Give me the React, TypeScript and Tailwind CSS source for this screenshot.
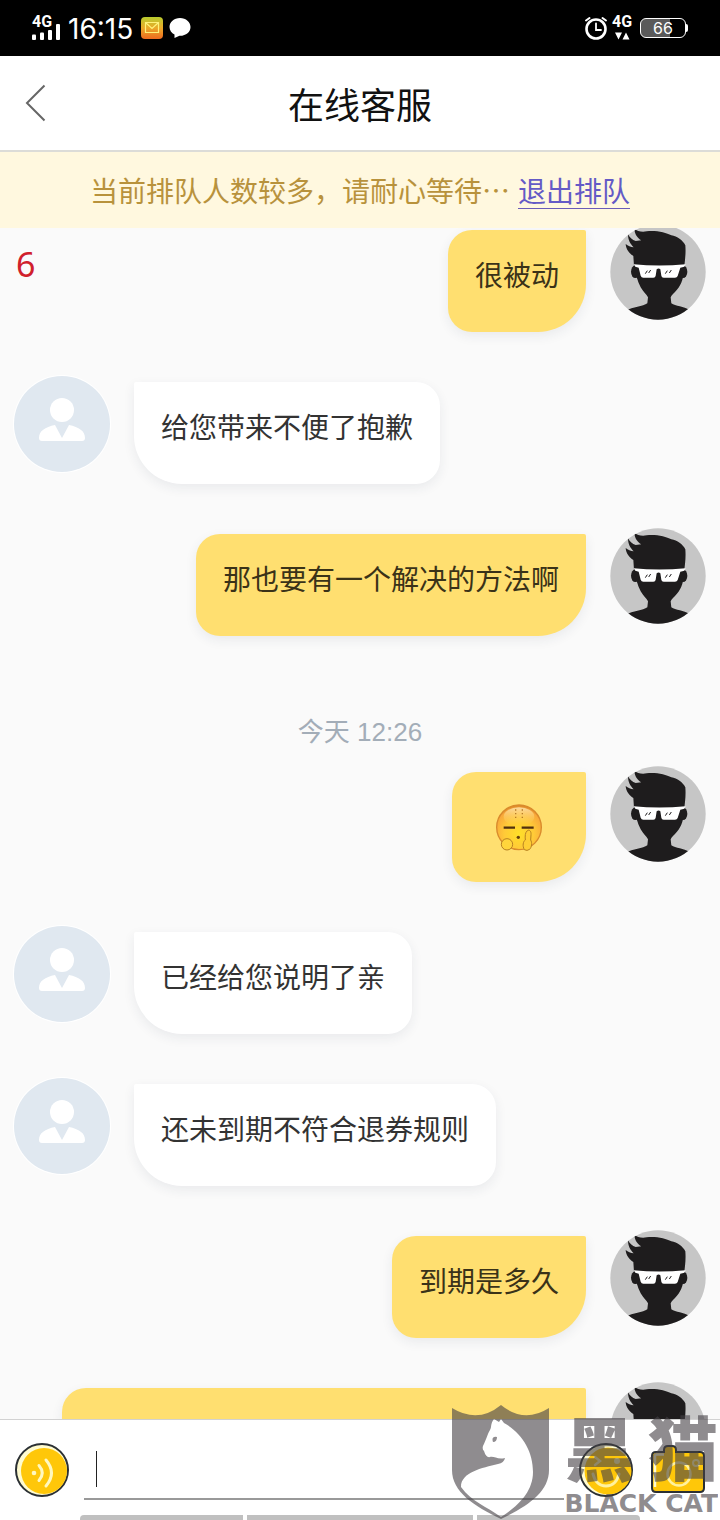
import type { ReactNode } from "react";

type Message = {
  id: number;
  from: "me" | "agent";
  text?: string;
  time?: string;
};

const messages: Message[] = [
  { id: 1, from: "me", text: "很被动" },
  { id: 2, from: "agent", text: "给您带来不便了抱歉" },
  { id: 3, from: "me", text: "那也要有一个解决的方法啊" },
  { id: 4, from: "me", time: "今天 12:26" },
  { id: 5, from: "agent", text: "已经给您说明了亲" },
  { id: 6, from: "agent", text: "还未到期不符合退券规则" },
  { id: 7, from: "me", text: "到期是多久" },
];

function StatusBar() {
  return (
    <div className="flex h-14 shrink-0 items-center justify-between bg-black pr-8 pl-8 font-['Roboto','Liberation_Sans',sans-serif] text-white">
      <div className="flex items-center">
        <div className="flex w-7 flex-col">
          <span className="text-[16px] leading-3 font-bold">4G</span>
          <svg viewBox="0 0 28 16" className="-mt-1 h-4 w-7" fill="#fff" aria-hidden="true">
            <rect x="0" y="10.500" width="4" height="5.500" rx="1" />
            <rect x="8" y="8.500" width="4" height="7.500" rx="1" />
            <rect x="16" y="6" width="4" height="10" rx="1" />
            <rect x="24" y="0" width="4" height="16" rx="1" />
          </svg>
        </div>
        <span className="ml-2 pt-0.5 font-['Inter','Roboto',sans-serif] text-[28px] leading-8">16:15</span>
        <svg viewBox="0 0 22 22" className="ml-2 size-[22px]" aria-hidden="true">
          <defs>
            <linearGradient id="mail" x1="0" y1="0" x2="0" y2="1">
              <stop offset="0" stopColor="#b9cc2e" />
              <stop offset="0.5" stopColor="#eba928" />
              <stop offset="1" stopColor="#ee6a1f" />
            </linearGradient>
          </defs>
          <rect width="22" height="22" rx="4" fill="url(#mail)" />
          <path d="M4.500 5.500h13v10h-13z M4.500 5.500l6.500 6 6.500-6" fill="none" stroke="#fff27a" strokeWidth="1.200" />
        </svg>
        <svg viewBox="0 0 22 22" className="ml-1.5 size-[22px]" fill="#fff" aria-hidden="true">
          <path d="M11 1C5 1 .5 5 .5 10c0 3.200 2 6 5 7.600L5.500 21l5-2.200c6.500.2 11-3.800 11-8.800S17 1 11 1z" />
        </svg>
      </div>
      <div className="flex items-center gap-1">
        <svg viewBox="0 0 24 24" className="size-6" fill="none" stroke="#fff" strokeLinecap="round" aria-hidden="true">
          <circle cx="12" cy="13" r="9.500" strokeWidth="2.600" />
          <path d="M12 7.500V14h5" strokeWidth="1.800" />
          <path d="M2 4.500L5.500 2M22 4.500L18.500 2" strokeWidth="2" />
        </svg>
        <div className="flex w-5 flex-col items-center">
          <span className="text-[16px] leading-3 font-bold">4G</span>
          <svg viewBox="0 0 16 8" className="mt-1 h-2 w-4" fill="#fff" aria-hidden="true">
            <path d="M1 .5h7l-3.500 7zM8.500 7.500h7L12 .5z" />
          </svg>
        </div>
        <div className="ml-1 flex items-center">
          <div className="flex h-5 w-[46px] items-center justify-center rounded-md border border-white bg-linear-to-r from-[#5a5a5a] from-66% to-black to-66% font-['Inter',sans-serif] text-base leading-4">
            66
          </div>
          <div className="h-2 w-0.5 rounded-r bg-white" />
        </div>
      </div>
    </div>
  );
}

function CustomerAvatar() {
  return (
    <svg viewBox="0 0 288 288" className="size-24 shrink-0" role="img" aria-label="我">
      <defs>
        <clipPath id="face">
          <circle cx="144" cy="144" r="143" />
        </clipPath>
      </defs>
      <g clipPath="url(#face)">
        <rect width="288" height="288" fill="#c6c6c6" />
        <g fill="#1e1c1d">
          <path d="M72 126L70 96C58 88 48 76 47 60C54 66 62 69 71 70C61 60 54 48 54 31C60 42 67 48 77 51L94 49C82 42 74 30 73 14C82 22 96 25 110 22C140 19 168 26 184 34C202 38 218 48 226 64C228 88 225 108 223 126C222 160 214 182 202 196C192 208 184 214 182 220L184 238C196 246 222 248 238 258V290H50V260C66 248 100 248 112 238L114 220C110 212 98 202 92 190C82 172 78 150 72 126z" />
          <ellipse cx="76" cy="143" rx="13" ry="19" />
          <ellipse cx="219" cy="143" rx="13" ry="19" />
        </g>
        <path d="M71 121Q147 128 227 121L223 128L211 131L203 156Q201 161 195 161H161Q155 161 154 155L151 136Q146 131 140 136L137 155Q136 161 130 161H100Q94 161 92 155L86 131L76 128z" fill="#fff" />
        <path d="M106 149l6-9M116 147l6-9M166 149l6-9M178 147l6-9" stroke="#1e1c1d" strokeWidth="3" />
      </g>
    </svg>
  );
}

function AgentAvatar() {
  return (
    <div className="size-24 shrink-0 rounded-full bg-[#e0e8f0] ring-1 ring-white">
      <svg viewBox="0 0 96 96" className="size-24" fill="#fff" role="img" aria-label="客服">
        <circle cx="48" cy="34" r="12" />
        <path d="M25 62C25 55 31 51 41 49L48 62L55 49C65 51 71 55 71 62Q71 65 68 65H28Q25 65 25 62z" />
      </svg>
    </div>
  );
}

function FaceEmoji() {
  return (
    <svg viewBox="0 0 144 144" className="size-12" role="img" aria-label="表情">
      <defs>
        <radialGradient id="skin" cx="0.5" cy="0.65" r="0.66">
          <stop offset="0" stopColor="#ffdf28" />
          <stop offset="0.5" stopColor="#ffca38" />
          <stop offset="0.85" stopColor="#f9a93a" />
          <stop offset="1" stopColor="#d27c22" />
        </radialGradient>
        <linearGradient id="shine" x1="0" y1="0" x2="0" y2="1">
          <stop offset="0" stopColor="#fff3c8" stopOpacity="0.7" />
          <stop offset="1" stopColor="#ffd864" stopOpacity="0" />
        </linearGradient>
      </defs>
      <circle cx="72" cy="70" r="67" fill="url(#skin)" stroke="#d98a2c" strokeWidth="4" />
      <ellipse cx="72" cy="38" rx="46" ry="28" fill="url(#shine)" />
      <path d="M26 71h34M80 71h36" stroke="#51300f" strokeWidth="7" />
      <path d="M62 16v26M82 16v26" stroke="#b87c28" strokeWidth="4" strokeDasharray="4 7" />
      <circle cx="70" cy="100" r="5" fill="#65400d" />
      <circle cx="36" cy="121" r="17" fill="#ffd53c" stroke="#b78022" strokeWidth="3" />
      <path d="M97 80C103 76 109 81 108 92L107 108C112 116 110 130 104 136Q96 142 88 137C82 126 84 112 91 108C90 96 90 86 97 80z" fill="#ffcf35" stroke="#b78022" strokeWidth="3" />
    </svg>
  );
}

function Bubble({ from, children, wide }: { from: "me" | "agent"; children?: ReactNode; wide?: boolean }) {
  const side =
    from === "me"
      ? "rounded-tl-3xl rounded-tr-xs rounded-br-[48px] rounded-bl-3xl bg-[#ffdf70] text-[#3a3218]"
      : "rounded-tl-xs rounded-tr-3xl rounded-br-3xl rounded-bl-[48px] bg-white text-[#333333]";
  const padding = wide ? "px-[43px] pt-8 pb-[30px]" : "px-[27px] pt-6 pb-[38px]";
  return (
    <div className={`mt-1.5 text-[28px] leading-10 shadow-[0_4px_12px_rgba(40,50,80,0.08)] ${side} ${padding}`}>
      {children}
    </div>
  );
}

function Row({ from, children }: { from: "me" | "agent"; children: ReactNode }) {
  return (
    <li className={`mb-11 flex items-start gap-6 ${from === "me" ? "flex-row-reverse" : ""}`}>
      {from === "me" ? <CustomerAvatar /> : <AgentAvatar />}
      {children}
    </li>
  );
}

function Conversation() {
  return (
    <main className="relative min-h-0 flex-1 overflow-hidden bg-[#fafafa]">
      <span className="absolute top-3.5 left-4 font-['Noto_Sans',sans-serif] text-[34px] leading-11 text-[#d0202c]">6</span>
      <ul className="-mt-1 px-3.5">
        {messages.map((m) =>
          m.time ? (
            <li key={m.id}>
              <p className="mb-[18px] pt-9 text-center font-['Liberation_Sans','Noto_Sans_CJK_SC',sans-serif] text-[26px] leading-8 text-[#a3adb8]">
                {m.time}
              </p>
              <div className="mb-11 flex flex-row-reverse items-start gap-6">
                <CustomerAvatar />
                <Bubble from="me" wide>
                  <FaceEmoji />
                </Bubble>
              </div>
            </li>
          ) : (
            <Row key={m.id} from={m.from}>
              <Bubble from={m.from}>{m.text}</Bubble>
            </Row>
          ),
        )}
        <li className="flex items-start gap-6 pl-12">
          <div className="mt-1.5 h-24 flex-1 rounded-tl-3xl rounded-tr-xs bg-[#ffdf70] shadow-[0_4px_12px_rgba(40,50,80,0.08)]" />
          <CustomerAvatar />
        </li>
      </ul>
    </main>
  );
}

function Composer() {
  return (
    <footer className="shrink-0 border-t border-[#d2d2d2] bg-white">
      <div className="flex items-center gap-[15px] px-[15px] pt-5 pb-[15px]">
        <button type="button" aria-label="语音" className="shrink-0">
          <svg viewBox="0 0 54 54" className="size-[54px]" fill="none" aria-hidden="true">
            <circle cx="27" cy="27" r="26" fill="#fffbd0" stroke="#2b3034" strokeWidth="2" />
            <circle cx="29" cy="28" r="23" fill="#ffc709" />
            <circle cx="19" cy="30" r="2.300" fill="#fff8c0" />
            <path d="M24 22.500q6.500 7.500 0 15M31 17q11 13 0 26" stroke="#fff8c0" strokeWidth="3" strokeLinecap="round" />
          </svg>
        </button>
        <label className="flex h-[60px] min-w-0 flex-1 items-center border-b-2 border-[#999999] pl-3">
          <span className="h-9 w-px shrink-0 bg-[#222222]" />
          <input aria-label="输入消息" className="min-w-0 flex-1 bg-transparent text-[28px] outline-none" />
        </label>
        <button type="button" aria-label="表情" className="shrink-0">
          <svg viewBox="0 0 54 54" className="size-[54px]" fill="none" aria-hidden="true">
            <circle cx="27" cy="27" r="26" fill="#fffbd0" stroke="#2b3034" strokeWidth="2" />
            <circle cx="29" cy="28" r="23.500" fill="#ffc709" />
            <path d="M16 14l5 4-5 4" stroke="#fff2a0" strokeWidth="2.500" strokeLinecap="round" />
            <circle cx="38" cy="18" r="3" fill="#fff2a0" />
            <path d="M14 31q3 12 13 12t13-12" stroke="#fff2a0" strokeWidth="3" strokeLinecap="round" />
          </svg>
        </button>
        <button type="button" aria-label="拍照" className="shrink-0">
          <svg viewBox="0 0 57 54" className="h-[54px] w-[57px]" fill="none" aria-hidden="true">
            <path d="M8 9H16V7Q16 3 20 3H24Q28 3 28 7V9H52Q56 9 56 13V45Q56 49 52 49H8Q4 49 4 45V13Q4 9 8 9z" fill="#ffc709" stroke="#2b3034" strokeWidth="2" />
            <path d="M7 44V13q0-1.500 1.500-1.500H16" stroke="#fffbd0" strokeWidth="2.500" />
            <circle cx="31" cy="31" r="11.500" stroke="#fff2a0" strokeWidth="2.500" />
            <circle cx="48" cy="20" r="3" stroke="#fff2a0" strokeWidth="2" />
          </svg>
        </button>
      </div>
      <div className="flex h-[5px] gap-1 px-20">
        <div className="flex-1 rounded-tl bg-[#c0c0c0]" />
        <div className="w-[226px] bg-[#c0c0c0]" />
        <div className="flex-1 rounded-tr bg-[#c0c0c0]" />
      </div>
    </footer>
  );
}

function Watermark() {
  return (
    <div className="pointer-events-none absolute right-0.5 bottom-0 flex items-end gap-[14px] text-[#454146] opacity-60">
      <svg viewBox="0 0 98 116" className="h-[116px] w-[98px]" aria-hidden="true">
        <path
          fill="currentColor"
          fillRule="evenodd"
          d="M0 4Q26 20 49 1Q72 20 97 4V66C97 88 76 102 49 115C22 102 0 88 0 66zM42 15C38 20 40 23 38 26C35 31 35 34 31 42Q30 45 32 47Q34 54 38 53C42 52 46 56 53 54Q52 59 46 60C30 64 9 68 9 83C20 98 34 102 49 113C66 102 81 88 81 68C81 47 70 29 52 19L49 15L47 18zM41 38Q39 32 45 33Q45 38 41 38z"
        />
      </svg>
      <div className="flex flex-col gap-3 pb-1">
        <div className="flex justify-between text-[70px] leading-[68px] font-black">
          <span>黑</span>
          <span>猫</span>
        </div>
        <span className="font-['DejaVu_Sans',sans-serif] text-[25px] leading-6 font-bold whitespace-nowrap">BLACK CAT</span>
      </div>
    </div>
  );
}

export default function App() {
  return (
    <div
      lang="zh-CN"
      className="relative flex h-screen flex-col overflow-hidden bg-white font-['Noto_Sans_CJK_SC',sans-serif]"
    >
      <StatusBar />
      <header className="grid h-24 shrink-0 grid-cols-[80px_1fr_80px] items-center border-b-2 border-[#dcdcd8] bg-white">
        <button type="button" aria-label="返回" className="pl-6">
          <svg viewBox="0 0 24 40" className="h-10 w-6" fill="none" stroke="#666" strokeWidth="2" aria-hidden="true">
            <path d="M20.500 2.500L3 20l17.500 17.500" />
          </svg>
        </button>
        <h1 className="text-center text-4xl leading-12 text-[#111111]">在线客服</h1>
      </header>
      <div className="flex h-[76px] shrink-0 items-center justify-center gap-2 bg-[#fff8df] text-[28px] leading-9 text-[#b8923c]">
        <p>当前排队人数较多，请耐心等待…</p>
        <a href="#leave" className="border-b border-[#6a5cb8] text-[#645ac6]">
          退出排队
        </a>
      </div>
      <Conversation />
      <Composer />
      <Watermark />
    </div>
  );
}
